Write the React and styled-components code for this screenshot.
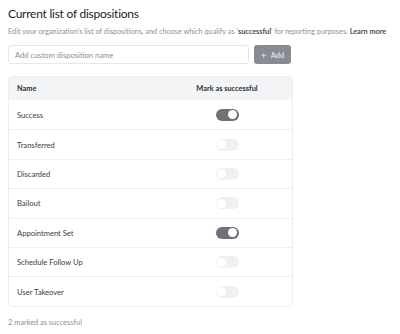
import React, { useState } from "react";
import styled, { createGlobalStyle } from "styled-components";

const GlobalStyle = createGlobalStyle`
  body {
    margin: 0;
    background: #ffffff;
    font-family: "Lato", "Noto Sans", sans-serif;
    color: #1f2328;
  }
`;

const Page = styled.div`
  padding: 5px 8px 0 8px;
  width: 400px;
  box-sizing: border-box;
`;

const Title = styled.h1`
  margin: 0;
  font-size: 12px;
  font-weight: 400;
  letter-spacing: -0.25px;
  line-height: 17px;
  color: #1a1d21;
`;

const Subtitle = styled.p`
  margin: 4px 0 0 0;
  font-size: 7.3px;
  line-height: 12px;
  color: #8a8f98;
  white-space: nowrap;

  b {
    color: #4b5058;
    font-weight: 700;
  }
`;

const AddRow = styled.div`
  display: flex;
  gap: 5px;
  margin-top: 7px;
  width: 283px;
`;

const Input = styled.input`
  flex: 1;
  height: 17px;
  border: 1px solid #e3e6ea;
  border-radius: 3px;
  padding: 0 6px;
  font-family: inherit;
  font-size: 7.6px;
  color: #333;
  outline: none;

  &::placeholder {
    color: #8a8f98;
  }
`;

const AddButton = styled.button`
  width: 37px;
  height: 19px;
  border: none;
  border-radius: 3px;
  background: #878b93;
  color: #eef0f2;
  font-family: inherit;
  font-size: 7.6px;
  display: flex;
  align-items: center;
  justify-content: center;
  gap: 4px;
  padding: 0;
`;

const Table = styled.div`
  margin-top: 12px;
  width: 283px;
  border: 1px solid #eceef1;
  border-radius: 4px;
  overflow: hidden;
`;

const HeaderRow = styled.div`
  display: grid;
  grid-template-columns: 1fr 130px;
  align-items: center;
  height: 23px;
  padding: 0 0 0 8px;
  background: #f3f4f6;
  font-size: 7.4px;
  font-weight: 700;
  color: #2b2f35;
`;

const HeaderCell = styled.div`
  text-align: ${(p) => (p.center ? "center" : "left")};
`;

const Row = styled.div`
  display: grid;
  grid-template-columns: 1fr 130px;
  align-items: center;
  height: 29.4px;
  padding-left: 8px;
  border-top: 1px solid #eef0f2;
  font-size: 7.6px;
  color: #3a3e44;
  box-sizing: border-box;
  &:first-of-type {
    border-top: none;
  }
`;

const ToggleCell = styled.div`
  display: flex;
  justify-content: center;
`;

const Track = styled.button`
  position: relative;
  width: 23px;
  height: 12px;
  border: none;
  border-radius: 6px;
  padding: 0;
  background: ${(p) => (p.on ? "#6e7178" : "#eef1f4")};
  cursor: pointer;
`;

const Knob = styled.span`
  position: absolute;
  top: 1.5px;
  left: ${(p) => (p.on ? "12px" : "1.5px")};
  width: 9px;
  height: 9px;
  border-radius: 50%;
  background: #ffffff;
`;

const Footer = styled.div`
  margin-top: 11px;
  font-size: 7.4px;
  color: #8a8f98;
`;

const initial = [
  { name: "Success", on: true },
  { name: "Transferred", on: false },
  { name: "Discarded", on: false },
  { name: "Bailout", on: false },
  { name: "Appointment Set", on: true },
  { name: "Schedule Follow Up", on: false },
  { name: "User Takeover", on: false },
];

const App = () => {
  const [items, setItems] = useState(initial);

  const toggle = (i) => {
    setItems(items.map((it, j) => (j === i ? { ...it, on: !it.on } : it)));
  };

  const count = items.filter((it) => it.on).length;

  return (
    <Page>
      <GlobalStyle />
      <Title>Current list of dispositions</Title>
      <Subtitle>
        Edit your organization's list of dispositions, and choose which qualify as
        '<b>successful</b>' for reporting purposes. <b>Learn more</b>
      </Subtitle>
      <AddRow>
        <Input placeholder="Add custom disposition name" />
        <AddButton>
          <span style={{ fontSize: "10px", lineHeight: 1 }}>+</span> Add
        </AddButton>
      </AddRow>
      <Table>
        <HeaderRow>
          <HeaderCell>Name</HeaderCell>
          <HeaderCell center>Mark as successful</HeaderCell>
        </HeaderRow>
        <div>
          {items.map((it, i) => (
            <Row key={it.name}>
              <div>{it.name}</div>
              <ToggleCell>
                <Track on={it.on} onClick={() => toggle(i)}>
                  <Knob on={it.on} />
                </Track>
              </ToggleCell>
            </Row>
          ))}
        </div>
      </Table>
      <Footer>{count} marked as successful</Footer>
    </Page>
  );
};

export default App;
